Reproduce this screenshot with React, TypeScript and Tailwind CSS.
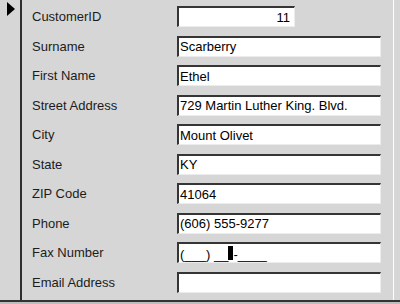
import React from "react";

type Field = { label: string; value: string; narrow?: boolean; right?: boolean; mask?: boolean };

const fields: Field[] = [
  { label: "CustomerID", value: "11", narrow: true, right: true },
  { label: "Surname", value: "Scarberry" },
  { label: "First Name", value: "Ethel" },
  { label: "Street Address", value: "729 Martin Luther King. Blvd." },
  { label: "City", value: "Mount Olivet" },
  { label: "State", value: "KY" },
  { label: "ZIP Code", value: "41064" },
  { label: "Phone", value: "(606) 555-9277" },
  { label: "Fax Number", value: "", mask: true },
  { label: "Email Address", value: "" },
];

const TextBox = ({ f }: { f: Field }) => (
  <div
    className={`h-[21px] bg-white border-t-2 border-l-2 border-[#353535] border-b border-r border-b-[#ececec] border-r-[#ececec] flex items-center text-[13px] text-black leading-none ${
      f.narrow ? "w-[118px] justify-end pr-[4px]" : "w-[204px] pl-[1px]"
    }`}
  >
    {f.mask ? (
      <span className="flex items-end whitespace-pre">
        <span>(___) __</span>
        <span className="inline-block w-[5px] h-[14px] bg-black mb-[1px]" />
        <span>-____</span>
      </span>
    ) : (
      <span className="whitespace-pre">{f.value}</span>
    )}
  </div>
);

const AccessForm = () => {
  return (
    <div
      className="w-[400px] h-[304px] bg-[#d6d6d6] flex flex-col overflow-hidden"
      style={{ fontFamily: '"Liberation Sans", Arial, sans-serif' }}
    >
      <div className="h-[300px] flex">
        {/* record selector */}
        <div className="w-[22px] border-r-2 border-[#2e2e2e] pl-[7px] pt-[2px]">
          <svg width="8" height="14" viewBox="0 0 8 14">
            <path d="M0 0 L8 7 L0 14 Z" fill="#000" />
          </svg>
        </div>

        {/* detail section */}
        <div className="w-[372px] border-r border-white pl-[10px] pt-[2px] flex flex-col">
          {fields.map((f) => (
            <div key={f.label} className="h-[29.5px] flex items-center">
              <span className="w-[145px] text-[13px] text-[#1c1c1c]">{f.label}</span>
              <TextBox f={f} />
            </div>
          ))}
        </div>
      </div>
      <div className="h-[2px] bg-[#333333]" />
      <div className="h-[2px] bg-[#bdbdbd]" />
    </div>
  );
};

export default function App() {
  return <AccessForm />;
}
